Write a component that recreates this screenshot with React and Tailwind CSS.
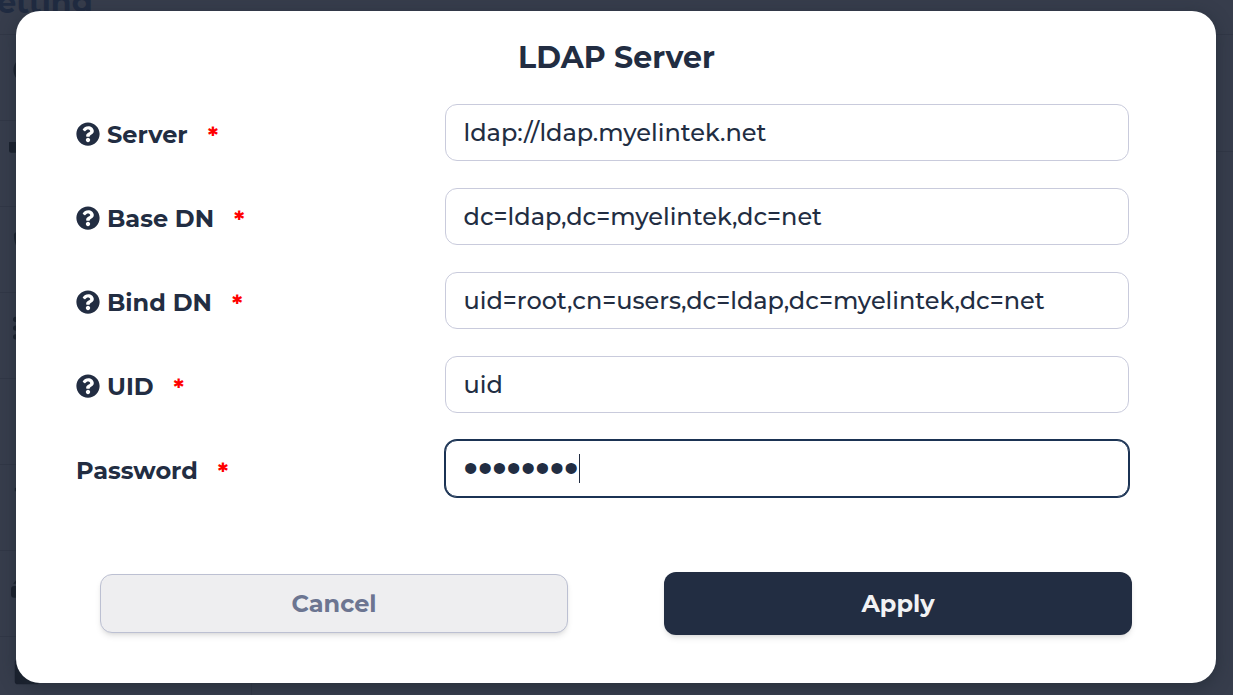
import React, { useState, useRef, useEffect } from 'react';
import { FaQuestionCircle, FaUserCircle, FaShieldAlt, FaListUl, FaFile, FaTrash, FaSquare } from 'react-icons/fa';

const CardIcon = ({ size }) => (
  <svg width={size + 6} height={size} viewBox="0 0 32 26" fill="currentColor" className="-ml-1">
    <rect x="0" y="-1" width="32" height="11" rx="2" />
    <rect x="10" y="14" width="22" height="10" rx="2" />
  </svg>
);

const TrayIcon = ({ size }) => (
  <svg width={size + 4} height={size} viewBox="0 0 30 26" fill="currentColor" className="-ml-0.5">
    <path d="M2 11 L11 0 L20 11 Z" />
    <rect x="0" y="13" width="30" height="11" rx="3" />
  </svg>
);

const menuIcons = [FaUserCircle, CardIcon, FaShieldAlt, FaListUl, FaFile, FaTrash, TrayIcon, FaSquare];

const fields = [
  { name: 'server', label: 'Server', help: true },
  { name: 'baseDn', label: 'Base DN', help: true },
  { name: 'bindDn', label: 'Bind DN', help: true },
  { name: 'uid', label: 'UID', help: true },
  { name: 'password', label: 'Password', type: 'password' },
];

const SettingPage = () => (
  <div className="absolute inset-0 flex flex-col overflow-hidden" aria-hidden="true">
    <div className="flex h-[35px] shrink-0 items-end border-b border-[#313746] pb-[15px]">
      <span className="-ml-[22px] text-[30px] leading-8 font-bold text-[#202b41]">Setting</span>
    </div>
    <div className="flex flex-1">
      <div className="w-[252px] shrink-0 border-r border-[#313746]">
        {menuIcons.map((Icon, i) => (
          <div key={i} className="flex h-[86px] items-center border-b border-[#313746] pb-4 pl-[13px] text-[#1a202d]">
            <Icon size={28} />
          </div>
        ))}
      </div>
      <div className="h-[117px] flex-1 border-b border-[#313746]" />
    </div>
  </div>
);

const Field = ({ field, value, onChange, inputRef }) => {
  const isPassword = field.type === 'password';
  const [focused, setFocused] = useState(false);

  return (
    <div className="flex items-center">
      <label htmlFor={field.name} className="flex w-[35%] items-center pt-1 text-2xl font-bold">
        {field.help && <FaQuestionCircle size={24} className="mr-[7px] mb-0.5 shrink-0" />}
        {field.label}
        <span className="mt-0.5 ml-5 text-[#ff0000]">*</span>
      </label>
      <div
        className={`relative h-[57px] flex-1 ${
          isPassword ? "font-['Liberation_Sans',sans-serif] text-[41px] caret-transparent" : 'text-2xl font-medium'
        }`}
      >
        <input
          ref={inputRef}
          id={field.name}
          type={field.type || 'text'}
          value={value}
          onChange={(e) => onChange(field.name, e.target.value)}
          onFocus={() => setFocused(true)}
          onBlur={() => setFocused(false)}
          className="block h-full w-full rounded-xl border border-[#c9cbdc] bg-white px-[18px] focus:border-[#1b3354] focus:ring-1 focus:ring-[#1b3354] focus:outline-none"
        />
        {isPassword && focused && (
          <span
            className="absolute top-3.5 h-[29px] w-px bg-[#222d42]"
            style={{ left: `calc(20px + ${value.length * 0.35}em)` }}
          />
        )}
      </div>
    </div>
  );
};

const App = () => {
  const passwordRef = useRef(null);
  const [values, setValues] = useState({
    server: 'ldap://ldap.myelintek.net',
    baseDn: 'dc=ldap,dc=myelintek,dc=net',
    bindDn: 'uid=root,cn=users,dc=ldap,dc=myelintek,dc=net',
    uid: 'uid',
    password: 'password',
  });

  // put the cursor behind the saved password
  useEffect(() => {
    const el = passwordRef.current;
    el.focus();
    el.setSelectionRange(el.value.length, el.value.length);
  }, []);

  const handleChange = (name, value) => {
    setValues({ ...values, [name]: value });
  };

  const handleSubmit = (e) => {
    e.preventDefault();
  };

  return (
    <div className="relative flex min-h-screen items-start overflow-hidden bg-[#373d4c] pt-[11px] pr-[17px] pb-3 pl-4 font-[Montserrat,Inter,sans-serif] text-[#222d42]">
      <SettingPage />
      <form
        onSubmit={handleSubmit}
        role="dialog"
        aria-labelledby="dialog-title"
        className="relative w-full rounded-3xl bg-white pt-[29px] pr-[87px] pb-12 pl-[60px] shadow-[0_4px_16px_rgba(30,40,50,0.6)]"
      >
        <h1 id="dialog-title" className="-mr-7 text-center text-[30px] leading-9 font-bold">
          LDAP Server
        </h1>
        <div className="mt-7 flex flex-col gap-[27px]">
          {fields.map((field) => (
            <Field
              key={field.name}
              field={field}
              value={values[field.name]}
              onChange={handleChange}
              inputRef={field.type === 'password' ? passwordRef : null}
            />
          ))}
        </div>
        <div className="-mr-[3px] mt-[75px] grid grid-cols-2 items-center gap-24 pl-6">
          <button
            type="button"
            className="h-[59px] rounded-xl border border-[#bcc0d2] bg-[#eeeef0] text-2xl font-bold text-[#6c7591] shadow-md"
          >
            Cancel
          </button>
          <button
            type="submit"
            className="h-[63px] rounded-xl bg-[#222d42] text-2xl font-bold text-[#f2f2f4] shadow-md"
          >
            Apply
          </button>
        </div>
      </form>
    </div>
  );
};

export default App;
